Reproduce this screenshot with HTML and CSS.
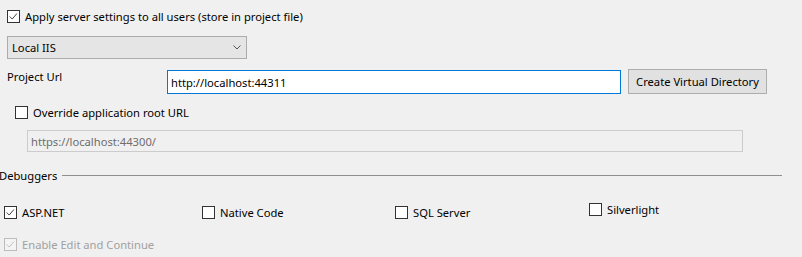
FILE: index.html
```html
<!DOCTYPE html>
<html lang="en">
<head>
<meta charset="UTF-8">
<title>Web Server Settings</title>
<link rel="stylesheet" href="styles.css">
</head>
<body>

<!-- SERVER -->
<div class="check-row apply">
  <span class="box checked"><svg viewBox="0 0 13 13"><path d="M2 6.5 L5 9.5 L10.5 3"/></svg></span>
  <span>Apply server settings to all users (store in project file)</span>
</div>

<div class="combo">
  <span>Local IIS</span>
  <svg class="chevron" viewBox="0 0 8 5"><path d="M0.5 0.5 L4 4 L7.5 0.5"/></svg>
</div>

<div class="url-row">
  <div class="url-label">Project Url</div>
  <div class="textbox focused">http://localhost:44311</div>
  <div class="button">Create Virtual Directory</div>
</div>

<div class="check-row override">
  <span class="box"></span>
  <span>Override application root URL</span>
</div>

<div class="textbox disabled">https://localhost:44300/</div>

<!-- DEBUGGERS -->
<div class="group-title">
  <span>Debuggers</span>
  <div class="rule"></div>
</div>

<div class="debuggers">
  <div class="check-row">
    <span class="box checked"><svg viewBox="0 0 13 13"><path d="M2 6.5 L5 9.5 L10.5 3"/></svg></span>
    <span>ASP.NET</span>
  </div>
  <div class="check-row">
    <span class="box"></span>
    <span>Native Code</span>
  </div>
  <div class="check-row">
    <span class="box"></span>
    <span>SQL Server</span>
  </div>
  <div class="check-row up">
    <span class="box"></span>
    <span>Silverlight</span>
  </div>
</div>

<div class="check-row edit disabled-row">
  <span class="box checked"><svg viewBox="0 0 13 13"><path d="M2 6.5 L5 9.5 L10.5 3"/></svg></span>
  <span>Enable Edit and Continue</span>
</div>

</body>
</html>
```

FILE: styles.css
```css
body {
  margin: 0;
  background: #f0f0f0;
  font-family: 'Segoe UI', 'Noto Sans', sans-serif;
  font-size: 11.2px;
  color: #000;
}

/* CHECKBOXES */
.check-row {
  display: flex;
  align-items: center;
  gap: 5px;
  height: 13px;
  white-space: nowrap;
}

.box {
  width: 13px;
  height: 13px;
  box-sizing: border-box;
  border: 1px solid #333;
  background: #fff;
  flex: none;
  display: flex;
}

.box svg {
  width: 11px;
  height: 11px;
}

.box path {
  fill: none;
  stroke: #333;
  stroke-width: 1.1;
}

.apply {
  margin: 10px 0 0 7px;
}

/* COMBO */
.combo {
  margin: 13px 0 0 7px;
  width: 240px;
  height: 23px;
  box-sizing: border-box;
  border: 1px solid #acacac;
  background: #e5e5e5;
  display: flex;
  align-items: center;
  justify-content: space-between;
  padding: 0 5px 0 4px;
}

.chevron {
  width: 8px;
  height: 5px;
}

.chevron path {
  fill: none;
  stroke: #555;
  stroke-width: 1;
}

/* PROJECT URL */
.url-row {
  margin-top: 10px;
  display: flex;
  align-items: flex-start;
}

.url-label {
  width: 160px;
  padding-left: 7px;
  line-height: 16px;
}

.textbox {
  box-sizing: border-box;
  display: flex;
  align-items: center;
  padding-left: 3px;
}

.textbox.focused {
  margin-top: 1px;
  width: 454px;
  height: 24px;
  border: 1px solid #0078d7;
  background: #fff;
}

.button {
  margin-left: 7px;
  width: 139px;
  height: 25px;
  box-sizing: border-box;
  border: 1px solid #adadad;
  background: #e1e1e1;
  display: flex;
  align-items: center;
  justify-content: center;
}

.override {
  margin: 12px 0 0 15px;
}

.textbox.disabled {
  margin: 11px 0 0 27px;
  width: 716px;
  height: 22px;
  border: 1px solid #cccccc;
  color: #6d6d6d;
}

/* DEBUGGERS */
.group-title {
  margin: 15px 20px 0 -1px;
  height: 16px;
  display: flex;
  align-items: center;
}

.rule {
  flex: 1;
  margin-left: 5px;
  border-top: 1px solid #8f8f8f;
}

.debuggers {
  margin: 23px 0 0 4px;
  display: grid;
  grid-template-columns: 198px 193px 194px auto;
}

.debuggers .up {
  margin-top: -3px;
}

.edit {
  margin: 19px 0 0 4px;
}

.disabled-row {
  color: #a0a0a0;
}

.disabled-row .box {
  border-color: #bcbcbc;
  background: #f4f4f4;
}

.disabled-row .box path {
  stroke: #bcbcbc;
}
```
